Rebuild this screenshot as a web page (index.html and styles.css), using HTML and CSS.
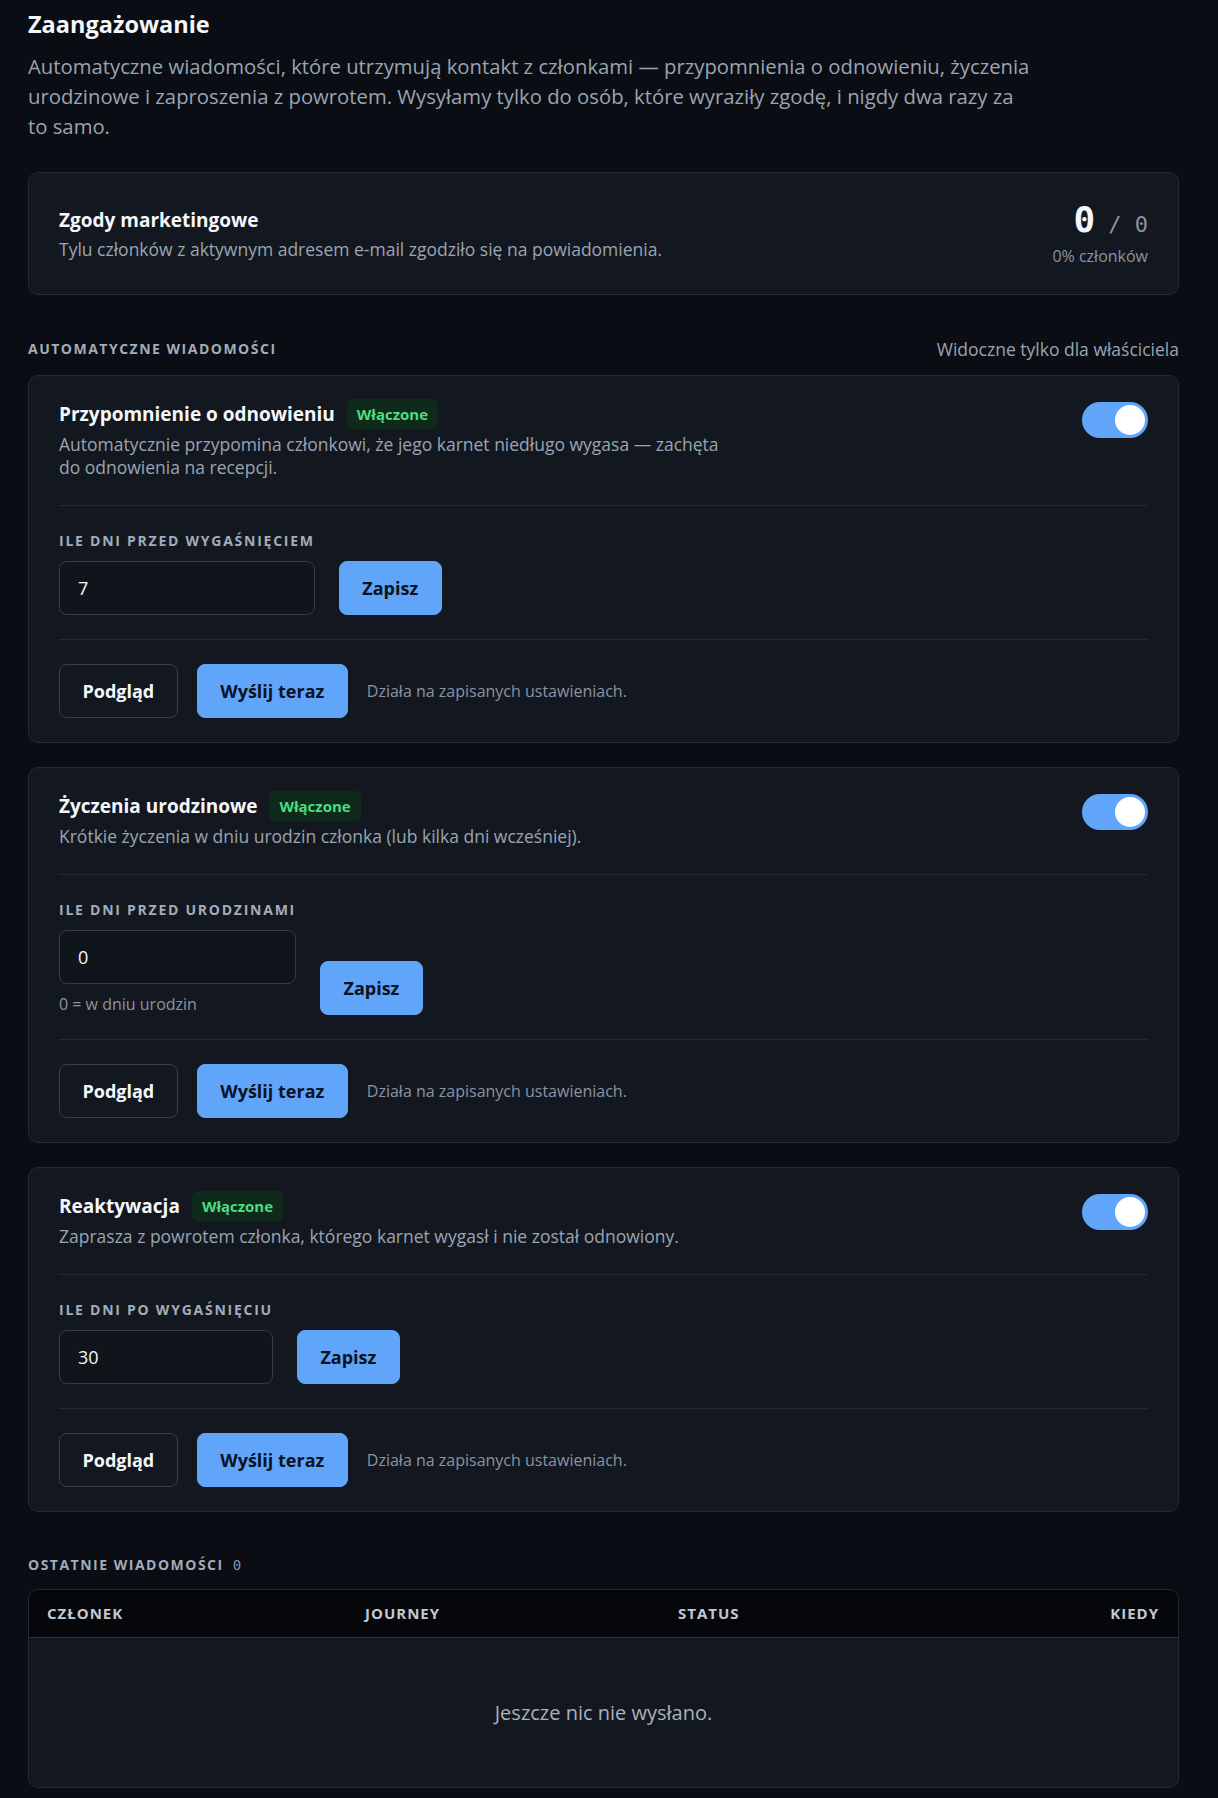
FILE: index.html
```html
<!DOCTYPE html>
<html lang="pl">
<head>
    <meta charset="UTF-8">
    <meta name="viewport" content="width=device-width, initial-scale=1.0">
    <title>Zaangażowanie</title>
    <link rel="stylesheet" href="styles.css">
</head>
<body>
    <main class="page">
        <h1 class="page-title">Zaangażowanie</h1>
        <p class="page-lead">Automatyczne wiadomości, które utrzymują kontakt z członkami — przypomnienia o odnowieniu, życzenia urodzinowe i zaproszenia z powrotem. Wysyłamy tylko do osób, które wyraziły zgodę, i nigdy dwa razy za to samo.</p>

        <!-- Zgody -->
        <section class="card consent-card">
            <div class="consent-text">
                <h2 class="card-title">Zgody marketingowe</h2>
                <p class="card-desc">Tylu członków z aktywnym adresem e-mail zgodziło się na powiadomienia.</p>
            </div>
            <div class="consent-stat">
                <div class="stat-value"><span class="stat-big">0</span><span class="stat-total">/ 0</span></div>
                <div class="stat-note">0% członków</div>
            </div>
        </section>

        <div class="section-head">
            <h3 class="section-label">Automatyczne wiadomości</h3>
            <span class="section-meta">Widoczne tylko dla właściciela</span>
        </div>

        <div class="journey-list">
            <article class="card journey">
                <div class="journey-head">
                    <div class="journey-info">
                        <div class="journey-title-row">
                            <h2 class="card-title">Przypomnienie o odnowieniu</h2>
                            <span class="badge-on">Włączone</span>
                        </div>
                        <p class="card-desc journey-desc">Automatycznie przypomina członkowi, że jego karnet niedługo wygasa — zachęta do odnowienia na recepcji.</p>
                    </div>
                    <label class="switch"><input type="checkbox" checked><span class="switch-track"></span></label>
                </div>
                <div class="journey-settings">
                    <div class="field">
                        <label class="field-label">Ile dni przed wygaśnięciem</label>
                        <input class="field-input" type="text" value="7">
                    </div>
                    <button type="button" class="btn btn-primary">Zapisz</button>
                </div>
                <div class="journey-actions">
                    <button type="button" class="btn btn-outline">Podgląd</button>
                    <button type="button" class="btn btn-primary">Wyślij teraz</button>
                    <span class="actions-note">Działa na zapisanych ustawieniach.</span>
                </div>
            </article>

            <article class="card journey">
                <div class="journey-head">
                    <div class="journey-info">
                        <div class="journey-title-row">
                            <h2 class="card-title">Życzenia urodzinowe</h2>
                            <span class="badge-on">Włączone</span>
                        </div>
                        <p class="card-desc journey-desc">Krótkie życzenia w dniu urodzin członka (lub kilka dni wcześniej).</p>
                    </div>
                    <label class="switch"><input type="checkbox" checked><span class="switch-track"></span></label>
                </div>
                <div class="journey-settings">
                    <div class="field">
                        <label class="field-label">Ile dni przed urodzinami</label>
                        <input class="field-input" type="text" value="0">
                        <div class="field-hint">0 = w dniu urodzin</div>
                    </div>
                    <button type="button" class="btn btn-primary">Zapisz</button>
                </div>
                <div class="journey-actions">
                    <button type="button" class="btn btn-outline">Podgląd</button>
                    <button type="button" class="btn btn-primary">Wyślij teraz</button>
                    <span class="actions-note">Działa na zapisanych ustawieniach.</span>
                </div>
            </article>

            <article class="card journey">
                <div class="journey-head">
                    <div class="journey-info">
                        <div class="journey-title-row">
                            <h2 class="card-title">Reaktywacja</h2>
                            <span class="badge-on">Włączone</span>
                        </div>
                        <p class="card-desc journey-desc">Zaprasza z powrotem członka, którego karnet wygasł i nie został odnowiony.</p>
                    </div>
                    <label class="switch"><input type="checkbox" checked><span class="switch-track"></span></label>
                </div>
                <div class="journey-settings">
                    <div class="field">
                        <label class="field-label">Ile dni po wygaśnięciu</label>
                        <input class="field-input" type="text" value="30">
                    </div>
                    <button type="button" class="btn btn-primary">Zapisz</button>
                </div>
                <div class="journey-actions">
                    <button type="button" class="btn btn-outline">Podgląd</button>
                    <button type="button" class="btn btn-primary">Wyślij teraz</button>
                    <span class="actions-note">Działa na zapisanych ustawieniach.</span>
                </div>
            </article>
        </div>

        <!-- Historia wysyłek -->
        <div class="section-head section-head-log">
            <h3 class="section-label">Ostatnie wiadomości <span class="section-count">0</span></h3>
        </div>

        <div class="table-card">
            <table class="log-table">
                <colgroup>
                    <col style="width: 318px">
                    <col style="width: 313px">
                    <col style="width: 313px">
                    <col>
                </colgroup>
                <thead>
                    <tr>
                        <th>Członek</th>
                        <th>Journey</th>
                        <th>Status</th>
                        <th class="col-right">Kiedy</th>
                    </tr>
                </thead>
                <tbody>
                    <tr>
                        <td colspan="4" class="empty-row">Jeszcze nic nie wysłano.</td>
                    </tr>
                </tbody>
            </table>
        </div>
    </main>
</body>
</html>
```

FILE: styles.css
```css
body {
    margin: 0;
    background-color: #0a0d13;
    color: #e8ecf1;
    font-family: "Open Sans", "Noto Sans", sans-serif;
}

.page {
    width: 1151px;
    padding: 7px 0 40px 28px;
}

.page-title {
    margin: 0;
    font-size: 23.5px;
    line-height: 34px;
    font-weight: 700;
    color: #f5f7fa;
}
.page-lead {
    margin: 10px 0 0;
    max-width: 1009px;
    font-size: 20.3px;
    line-height: 30px;
    color: #9ba4b1;
}

/* karty */
.card {
    background-color: #131820;
    border: 1px solid #242a34;
    border-radius: 10px;
}
.card-title {
    margin: 0;
    font-size: 19px;
    line-height: 26px;
    font-weight: 700;
    color: #f5f7fa;
}
.card-desc {
    margin: 0;
    font-size: 17.5px;
    line-height: 23px;
    color: #9ba4b1;
}

.consent-card {
    margin-top: 31px;
    padding: 28px 30px;
    display: flex;
    justify-content: space-between;
    align-items: center;
}
.consent-text .card-desc {
    margin-top: 5px;
}
.consent-stat {
    text-align: right;
}
.stat-value {
    height: 38px;
    display: flex;
    justify-content: flex-end;
    align-items: baseline;
    font-family: "DejaVu Sans Mono", "Liberation Mono", monospace;
}
.stat-big {
    font-size: 36px;
    line-height: 38px;
    font-weight: 700;
    color: #f5f7fa;
}
.stat-total {
    margin-left: 13px;
    font-size: 22px;
    line-height: 22px;
    color: #8b93a0;
}
.stat-note {
    margin-top: 7px;
    font-size: 16px;
    line-height: 20px;
    color: #8b93a0;
}

/* naglowki sekcji */
.section-head {
    margin: 44px 0 16px;
    display: flex;
    justify-content: space-between;
    align-items: center;
}
.section-head-log {
    margin: 43px 0 14px;
}
.section-label {
    margin: 0;
    font-size: 14px;
    line-height: 20px;
    font-weight: 700;
    letter-spacing: 1.5px;
    text-transform: uppercase;
    color: #a3acb8;
}
.section-count {
    margin-left: 4px;
    font-family: "DejaVu Sans Mono", monospace;
    font-weight: 400;
    line-height: 1;
    letter-spacing: 0;
    color: #8b93a0;
}
.section-meta {
    font-size: 17.5px;
    line-height: 20px;
    color: #9ba4b1;
}

/* journey */
.journey-list {
    display: flex;
    flex-direction: column;
    gap: 24px;
}
.journey {
    padding: 23px 30px 24px;
}
.journey-head {
    display: flex;
    justify-content: space-between;
    align-items: flex-start;
    padding-bottom: 26px;
}
.journey-title-row {
    display: flex;
    align-items: center;
    gap: 12px;
    height: 30px;
}
.journey-desc {
    margin-top: 4px;
    max-width: 670px;
}
.badge-on {
    display: inline-flex;
    align-items: center;
    height: 30px;
    padding: 0 10px;
    border-radius: 6px;
    background-color: #0f2a1b;
    color: #4ade80;
    font-size: 15px;
    font-weight: 700;
}

.switch {
    position: relative;
    margin-top: 3px;
    width: 66px;
    height: 36px;
    flex-shrink: 0;
}
.switch input {
    display: none;
}
.switch-track {
    display: block;
    width: 100%;
    height: 100%;
    border-radius: 18px;
    background-color: #60a5fa;
}
.switch-track::after {
    content: "";
    position: absolute;
    top: 3px;
    right: 3px;
    width: 30px;
    height: 30px;
    border-radius: 50%;
    background-color: #fff;
}

.journey-settings {
    border-top: 1px solid #232933;
    padding: 26px 0 24px;
    display: flex;
    align-items: flex-end;
    gap: 24px;
}
.field {
    display: flex;
    flex-direction: column;
}
.field-label {
    font-size: 14px;
    line-height: 18px;
    font-weight: 700;
    letter-spacing: 1.75px;
    text-transform: uppercase;
    color: #a3acb8;
    white-space: nowrap;
}
.field-input {
    box-sizing: border-box;
    margin-top: 11px;
    width: 0;
    min-width: 100%;
    height: 54px;
    padding: 0 18px;
    border: 1px solid #363c47;
    border-radius: 8px;
    background-color: #10141b;
    color: #f5f7fa;
    font-family: inherit;
    font-size: 18px;
    outline: none;
}
.field-hint {
    margin-top: 9px;
    font-size: 16px;
    line-height: 22px;
    color: #8b93a0;
}

.journey-actions {
    border-top: 1px solid #232933;
    padding-top: 24px;
    display: flex;
    align-items: center;
    gap: 19px;
}
.actions-note {
    font-size: 16px;
    color: #8b93a0;
}

/* przyciski */
.btn {
    height: 54px;
    padding: 0 22.5px;
    border: 1px solid transparent;
    border-radius: 8px;
    font-family: inherit;
    font-size: 18px;
    font-weight: 700;
    cursor: pointer;
}
.btn-primary {
    background-color: #60a5fa;
    border-color: #60a5fa;
    color: #0b1220;
}
.btn-outline {
    background-color: transparent;
    border-color: #393f4a;
    color: #f5f7fa;
}
.btn:hover {
    opacity: 0.85;
}

/* tabela */
.table-card {
    background-color: #131820;
    border: 1px solid #242a34;
    border-radius: 10px;
    overflow: hidden;
}
.log-table {
    width: 100%;
    border-collapse: collapse;
    table-layout: fixed;
}
.log-table th {
    padding: 14px 18px;
    background-color: #05070b;
    border-bottom: 1px solid #2b313c;
    text-align: left;
    font-size: 15px;
    line-height: 19px;
    font-weight: 700;
    letter-spacing: 1px;
    text-transform: uppercase;
    color: #c3c9d2;
}
.log-table th.col-right {
    text-align: right;
    padding-right: 19px;
}
.empty-row {
    padding: 63px 0 62px;
    text-align: center;
    font-size: 20px;
    line-height: 24px;
    color: #a9b1bd;
}
```
